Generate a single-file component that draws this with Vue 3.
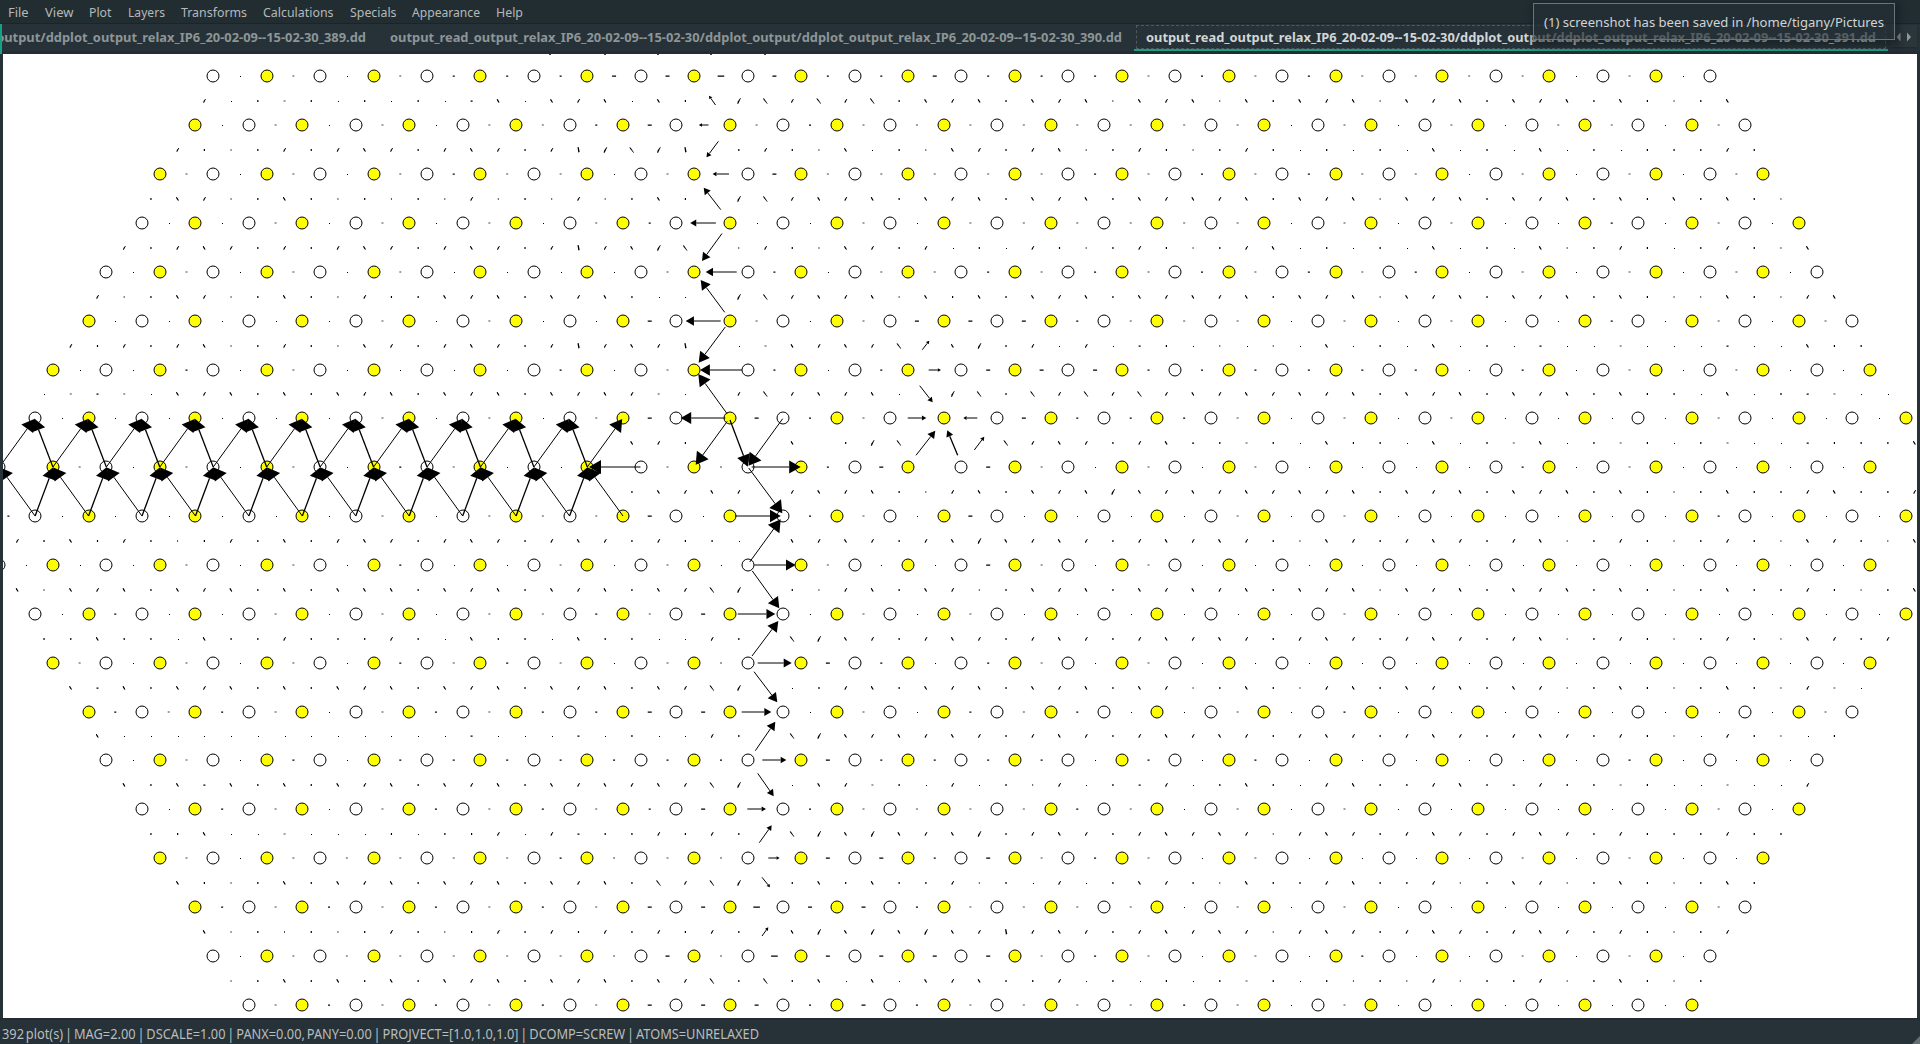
<script setup>
const menus = [
  ['File', 20.6], ['View', 28.5], ['Plot', 22.5], ['Layers', 37], ['Transforms', 66],
  ['Calculations', 70.5], ['Specials', 46.5], ['Appearance', 68], ['Help', 27],
]
const stem = 'output_read_output_relax_IP6_20-02-09--15-02-30/ddplot_output/ddplot_output_relax_IP6_20-02-09--15-02-30_'

const STEP = 53.445
const rowY = [76, 125, 174, 223, 272, 321, 370, 418, 467, 516, 565, 614, 663, 712, 760, 809, 858, 907, 956, 1005]
const rowX = (r, k) => (r % 2 ? 35.1 : 52.9) + STEP * k

// first and last lattice column of every row
const spans = [
  [3, 31], [3, 32], [2, 32], [2, 33], [1, 33], [1, 34], [0, 34], [0, 35], [-1, 34], [0, 35],
  [-1, 34], [0, 35], [0, 34], [1, 34], [1, 33], [2, 33], [2, 32], [3, 32], [3, 31], [4, 31],
]
const atoms = []
spans.forEach(([a, b], r) => {
  for (let k = a; k <= b; k++) {
    const yellow = r % 2 ? Math.abs(k) % 2 === 1 : k % 2 === 0
    atoms.push({ x: Math.round(rowX(r, k)), y: rowY[r], yellow })
  }
})

// displacement marks between horizontal neighbours: [first column, marks]
const flat = [
  [3, '.-.-===HHLH==H===-=-=----.-.'],
  [3, '.-.-.--=H -=--------.-.-.--.-'],
  [2, '-.-.-=--.- H-----=-=-=--.-.-.-'],
  [2, '..-.-.-.-= ..-.------.-.-..=.-.'],
  [1, '.-.-.-....- =.--=-=-=-=-=.-.-.-.'],
  [1, '.....-.-..H -.-HHH=---.-.-..=.-.-'],
  [0, '..=.-....=.- =.= HHH======.=.-.-..'],
  [0, '......-.-.-H H=-  H===-.-.-....-...'],
  [-1, ' -.-.-.=-.. -- =H H-.-.-....=.-....'],
  [-1, '=......-.---H. =-.H....-.-......=...'],
  [-1, '...-.-.=..-.-. -..H-.-.............'],
  [0, '.=..-.-.--=-H .-.-......-..........'],
  [0, '-.-.-.=-=-.-- H=.=-.-.............'],
  [1, '=-=-.-=-==HH .-.=-=..-.=........-'],
  [1, '.-.=.======= H====.=.=......=...'],
  [2, '.=-.-=-=-=H =----=-.-.-......-.'],
  [2, '-.-----=--- HH=H-=-.-....-.-..'],
  [3, '=-=-=-=-HHLHH=----.-.-......-'],
  [3, '.-------H-LHHHH-=-.-.=..-.-.'],
  [4, '-=-=-=-HHH=H=----=-.-......'],
]
// marks between diagonal neighbours, one string per gap between rows
const slant = [
  [6, 's.i-i.i.i.=b.bsb.bi SBsBsBibsbibsb,bsb,bibsb,bsbibsbibi,ib'],
  [5, 'si,isisbsisbsisISBSI isi,b.i,bsisb,isi,isi.i.i.b.i.b.i.iiisi'],
  [4, 'ibs,ibi,i,i,s,i,s,ibi SBsbsbibsbibsbibsbsbibsb,bsbibsbibibibi,'],
  [3, 'sisbsisisbsisbsisIsbSB ,si,bsis.i.si,isi,isb.i.i.b.i.b,isi.isi,b'],
  [2, 's,ibs,ibi,siibsbibsbi.. SBsbsb,bibibsbibsbsbibsb,bsbibsbibi,,bi,sb'],
  [1, 'sisisb,isi,bsisbsisIsbsI .-bsbsB bSis.s.=i.,.,.b.i.b.i.=..-...=..bii'],
  [0, '.-=-.bsbibibsbibsbibsbs-. sBsbsb. SBiBsBsBsbsbsbsbibsbibsbibii.b.i=-..'],
  [22, 'bsi   b iSB   Bsbsisb=i-i.bii.b.i-b.i-i.i-..=iiib'],
  [22, 'ibsbs sbsbi,sbibsbSbsbsbsbsbibsbibsbibi,ibiisbiis'],
  [-1, 'sibisi,isibisbsisbsisbsisii. bsbsisbSbsbsisbsbsi,bsisbsisb,isi,isi,bsi,b'],
  [-1, 'b,bsbibsbibibbbibsbibsbibsBS i,sbibs,ibsbibsbsbibsb,bsbibsbibi,ibiisi,ib'],
  [0, 'iibii.biisiiisi.bii.bii..si BSbsisbsisbsisbsbsisbsisbsisb,isi,isi,bsis'],
  [1, 'b=bibsbibibsbibsbibsbibsBS .isbibsbibsbibs,ibi,sbibsbibs,ibi,ibi,s-.'],
  [2, 'b.............=...=.i..si BSbsbsbsisbsisbsbsisbsisbsisbsisi,.si,.i'],
  [3, 'bib=bibibsbibsbibsbsbsBS .bs-i.s.i,s.i=s.ibi.sbiisbi=sii-i..-..s'],
  [4, 'iib..-...i.iis.s=iisisi BSbSbsbSisbsisbsbs,sbsisbsisbsisiiisii'],
  [5, 'bi,ibibsbibsbibsbiBsBS ibibiis,i.s.ibsi,biisbiis,ibs,ibi,ibi'],
  [6, 'b,i,i,isi,isisisisisi bSbSbSbsIsbsisbsbs,sbsisbsisbsisi,is'],
  [7, ',ibibibibsbibsbibsBiBib.b.bsbiis.i.i.i-i.i,i,s,iis,ibi,i'],
]
const shapes = {
  '.': 'm0 0h1v1h-1z',
  '-': 'm-1 -.5h2v1h-2z',
  '=': 'm-1 -.6h2v1.3h-2z',
  H: 'm-2 -.5h4v1.2h-4z',
  L: 'm-3.3 -.5h6.6v1.2h-6.6z',
  i: 'm-.6 -1.1h1.2v2.2h-1.2z',
  ',': 'm-.5 -1h.9v2h-.9z',
  I: 'm-1 -2.8l1.2 -.1l1 5l-1.4 .3z',
  s: 'm.8 -1.9h.8l-1.9 3.6h-1l.5 -1.6z',
  b: 'm-1.6 -1.9h.8l1.5 2.1l.4 1.5h-.8l-1.5 -2z',
  S: 'm1.5 -3h.6l-2.6 5.8h-1.1l.5 -2.4z',
  B: 'm-2.6 -3.1l1.4 .8l3.4 5.1h-.7l-3.4 -4.1z',
}
const faint = new Set(['-', ','])
let darkPath = ''
let lightPath = ''
let dotPath = ''
function mark(c, x, y) {
  if (c === ' ') return
  if (c === '.') {
    dotPath += `M${Math.round(x)} ${y}${shapes[c]}`
    return
  }
  const d = `M${x.toFixed(2)} ${y}${shapes[c]}`
  if (faint.has(c)) lightPath += d
  else darkPath += d
}
flat.forEach(([k0, s], r) => [...s].forEach((c, i) => mark(c, rowX(r, k0 + i + 0.5), rowY[r])))
slant.forEach(([j0, s], g) => [...s].forEach((c, i) => {
  mark(c, 44.05 + 26.722 * (j0 + i), Math.round((rowY[g] + rowY[g + 1]) / 2))
}))
for (const x of [549, 604, 657, 710, 764]) darkPath += `M${x} 54h2v.8h-2z`

// long arrows: tail x, tail y, tip x, tip y
const arrows = [
  [715.5, 105, 709, 95.7], [708.5, 125, 698.8, 125], [718.4, 141.3, 706.5, 157.3], [729, 174, 712.6, 174],
  [720.8, 209.7, 703.7, 187.7], [715.9, 223, 690.2, 223], [722, 233.5, 702, 261], [736.7, 272, 705.7, 272],
  [724.7, 312.3, 700.7, 280], [720.7, 321, 685.7, 321], [725.3, 327, 698.7, 362.7], [742, 370, 700, 370],
  [727.3, 414, 698.3, 374], [725.3, 418, 680.7, 418], [727.3, 421.3, 695.7, 464.7], [730, 420, 747.7, 466.7],
  [782.7, 418.7, 748.5, 465.8], [751.7, 467, 800.7, 467], [748.7, 468, 782.3, 513.3], [735.3, 516, 780.7, 516],
  [749.7, 562, 780.7, 519.3], [754.3, 565, 795.7, 565], [752.3, 571, 779.3, 608.3], [737.7, 614, 775.3, 614],
  [752, 656, 778.3, 621], [757.7, 663, 791.7, 663], [754, 671.7, 777.3, 702.3], [741.7, 712, 771.3, 712],
  [755.3, 750.7, 775.3, 721.7], [762.3, 760, 786.3, 760], [757.7, 773.3, 773.7, 796.3], [747.3, 809, 766, 809],
  [759.3, 842.7, 771.7, 825.3], [768.3, 858, 779.7, 858], [762, 877.3, 770, 887.3], [762, 936, 768.3, 927.3],
  [928.7, 370, 941, 370], [919.7, 385.7, 932.7, 402.3], [907.7, 418, 926.3, 418], [977.3, 418, 963.3, 418],
  [916, 455.3, 935.3, 430.7], [957.7, 455.3, 947.3, 430.3], [974.3, 450, 984.3, 436.7], [922.3, 349.7, 929.3, 340.7],
  [640.5, 467, 589, 467],
]
for (let k = 0; k <= 11; k++) {
  const x = rowX(7, k) - 0.8
  arrows.push([rowX(8, k - 1), 467, x, 419])
  if (k < 11) arrows.push([rowX(8, k), 467, x, 418.5])
}
for (let k = -1; k <= 10; k++) {
  const x = rowX(8, k) + 0.5
  if (k >= 0) arrows.push([rowX(9, k), 516, x, 467])
  arrows.push([rowX(9, k + 1), 516, x, 467.5])
}
const drawn = arrows.map(([x1, y1, x2, y2]) => {
  const len = Math.hypot(x2 - x1, y2 - y1)
  const ux = (x2 - x1) / len
  const uy = (y2 - y1) / len
  const h = Math.min(12, Math.max(3.2, len * 0.235))
  const w = Math.min(7.3, Math.max(1.8, len * 0.135))
  const bx = x2 - ux * h
  const by = y2 - uy * h
  const f = n => n.toFixed(2)
  return {
    line: `M${f(x1)} ${f(y1)}L${f(bx)} ${f(by)}`,
    head: `M${f(x2)} ${f(y2)}L${f(bx - uy * w)} ${f(by + ux * w)}L${f(bx + uy * w)} ${f(by - ux * w)}Z`,
    steep: Math.abs(ux) < 0.45,
  }
})
</script>

<template>
  <div class="window">
    <nav class="menubar">
      <span v-for="[name, w] in menus" :key="name" class="menu">
        <svg :width="w" height="23"><text x="0" y="17" :textLength="w" lengthAdjust="spacingAndGlyphs">{{ name }}</text></svg>
      </span>
    </nav>
    <div class="tabbar">
      <div class="tabs">
        <div class="tab first">
          <svg width="732" height="27"><text x="0" y="18" textLength="732" lengthAdjust="spacingAndGlyphs">{{ stem }}389.dd</text></svg>
        </div>
        <div class="tab">
          <svg width="732" height="27"><text x="0" y="18" textLength="732" lengthAdjust="spacingAndGlyphs">{{ stem }}390.dd</text></svg>
        </div>
        <div class="tab active">
          <svg width="730" height="27"><text x="0" y="18" textLength="730" lengthAdjust="spacingAndGlyphs">{{ stem }}391.dd</text></svg>
        </div>
      </div>
      <div class="scroller">
        <svg width="27" height="22"><path d="M10.5 7.5L6.5 12l4 4.5zM17 7.5l4 4.5-4 4.5z" /></svg>
      </div>
    </div>
    <main class="canvas">
      <svg class="plot" width="1914" height="964" viewBox="3 54 1914 964">
        <circle v-for="(a, i) in atoms" :key="i" :cx="a.x" :cy="a.y" r="6" class="atom" :class="{ yellow: a.yellow }" />
        <path :d="lightPath" class="faint" />
        <path :d="darkPath" />
        <path :d="dotPath" shape-rendering="crispEdges" />
        <template v-for="(a, i) in drawn" :key="'a' + i">
          <path :d="a.line" class="shaft" :class="{ steep: a.steep }" />
          <path :d="a.head" />
        </template>
      </svg>
    </main>
    <footer class="status">
      <svg width="762" height="26"><text x="2" y="21" textLength="757" lengthAdjust="spacingAndGlyphs">392 plot(s) | MAG=2.00 | DSCALE=1.00 | PANX=0.00, PANY=0.00 | PROJVECT=[1.0,1.0,1.0] | DCOMP=SCREW | ATOMS=UNRELAXED</text></svg>
      <span class="grip"></span>
    </footer>
    <div class="toast">
      <svg width="340" height="35"><text x="0" y="22.5" textLength="340" lengthAdjust="spacingAndGlyphs">(1) screenshot has been saved in /home/tigany/Pictures</text></svg>
    </div>
  </div>
</template>

<style>
body {
  margin: 0;
  background: #263238;
}
</style>

<style scoped>
.window {
  position: relative;
  width: 1920px;
  height: 1044px;
  overflow: hidden;
  display: flex;
  flex-direction: column;
  background: #263238;
  font-family: "Noto Sans", "Open Sans", sans-serif;
  font-size: 13px;
}
svg {
  display: block;
  overflow: visible;
}
.plot {
  overflow: hidden;
}
.menubar {
  flex: none;
  box-sizing: border-box;
  height: 24px;
  padding-left: 8px;
  display: flex;
  gap: 16px;
  background: #222d32;
  border-bottom: 1px solid #1b2427;
}
.menu {
  height: 23px;
  fill: #b4b9ba;
}
.menu:nth-child(n + 5) {
  position: relative;
  left: 0.6px;
}
.tabbar {
  flex: none;
  box-sizing: border-box;
  height: 30px;
  display: flex;
  border-left: 2px solid #16a085;
  background: #273238;
  background-clip: padding-box;
  box-shadow: inset 0 -3px #222c31;
}
.tabs {
  width: 1886px;
  display: flex;
  justify-content: flex-end;
  overflow: hidden;
}
.tab {
  flex: none;
  box-sizing: border-box;
  height: 27px;
  padding: 0 12px;
  font-weight: 700;
  fill: #8d9597;
}
.tab.first {
  padding-left: 0;
}
.tab.active {
  position: relative;
  width: 754px;
  border-bottom: 2px solid #16a085;
  fill: #d3d6d7;
}
.tab.active::after {
  content: "";
  position: absolute;
  inset: 1px 2px 0 2px;
  border: 1px dashed #50595c;
}
.scroller {
  margin: 1px 0 0 2px;
  width: 27px;
  height: 22px;
  background: #2b363b;
  box-shadow: 0 1px 2px #1d272b;
  fill: #929a9c;
}
.canvas {
  flex: none;
  width: 1914px;
  height: 964px;
  margin-left: 3px;
  background: #fff;
}
.atom {
  fill: #fff;
  stroke: #000;
  stroke-width: 1;
}
.atom.yellow {
  fill: #ff0;
}
.faint {
  fill: #444;
}
.shaft {
  fill: none;
  stroke: #000;
  stroke-width: 1;
}
.shaft.steep {
  stroke-width: 1.3;
}
.status {
  position: relative;
  height: 26px;
  box-shadow: inset 0 2px #222c31;
  font-size: 13.5px;
  word-spacing: -1.5px;
  fill: #b8bdbe;
}
.grip {
  position: absolute;
  right: 0;
  bottom: 0;
  border-left: 8px solid transparent;
  border-bottom: 8px solid #667074;
}
.toast {
  position: absolute;
  box-sizing: border-box;
  left: 1533px;
  top: 3px;
  width: 362px;
  height: 37px;
  padding-left: 10px;
  border: 1px solid #68757a;
  background: rgba(36, 47, 53, 0.72);
  box-shadow: 2px 3px 6px 3px rgba(18, 25, 28, 0.5);
  fill: #d0d4d5;
}
</style>
